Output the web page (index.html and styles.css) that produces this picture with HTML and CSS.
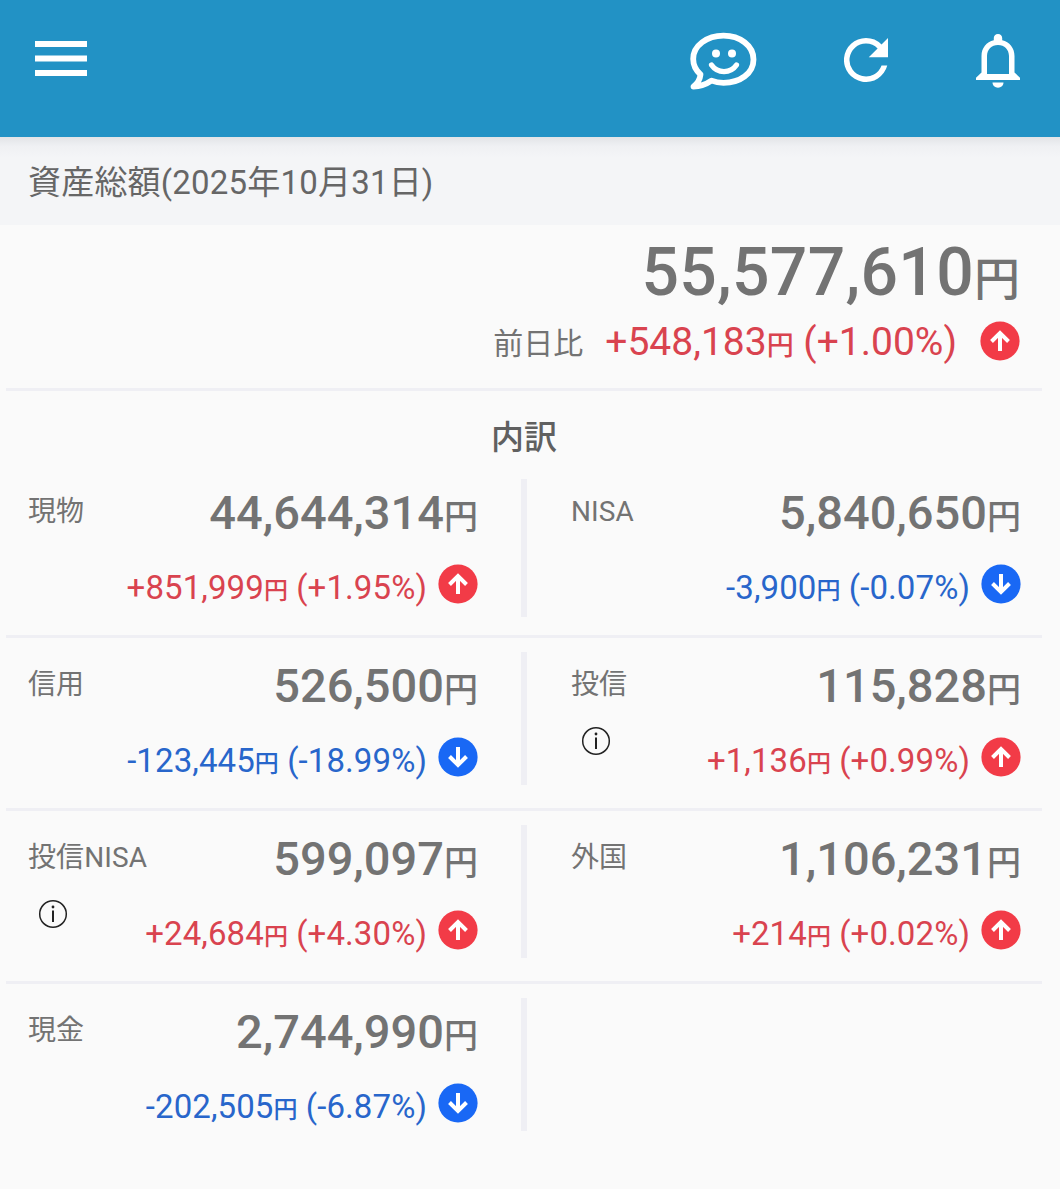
FILE: index.html
```html
<!DOCTYPE html>
<html lang="ja">
<head>
<meta charset="utf-8">
<title>資産総額</title>
<link rel="stylesheet" href="styles.css">
</head>
<body>
<svg class="defs" width="0" height="0" aria-hidden="true">
  <symbol id="up" viewBox="0 0 40 40"><circle cx="20" cy="20" r="19.6" fill="#f23b47"/><path d="M20 30V12M11.500 20.500l8.500-8.500 8.500 8.500" fill="none" stroke="#fff" stroke-width="4"/></symbol>
  <symbol id="down" viewBox="0 0 40 40"><circle cx="20" cy="20" r="19.6" fill="#1968f5"/><path d="M20 10v18M11.500 19.500l8.500 8.500 8.500-8.500" fill="none" stroke="#fff" stroke-width="4"/></symbol>
  <symbol id="info" viewBox="0 0 30 30"><circle cx="15" cy="15" r="13.300" fill="none" stroke="#222" stroke-width="1.500"/><path d="M15 11.500v11.500" stroke="#222" stroke-width="2"/><circle cx="15" cy="8" r="1.400" fill="#222"/></symbol>
</svg>
<header class="appbar">
  <svg class="menu" viewBox="0 0 52 36"><path d="M0 3h52M0 17.500h52M0 32h52" stroke="#fff" stroke-width="6"/></svg>
  <svg class="chat" viewBox="0 0 68 60" fill="none" stroke="#fff" stroke-linecap="round" stroke-linejoin="round"><path d="M11.500 43.500C6.500 39 4.200 33.500 4.200 28 4.200 14.500 18 4.700 34.500 4.700S64.500 14.500 64.500 28.500 51 51.800 34.500 51.800c-4.500 0-8.500-.8-12-2.200C17.500 53 11.500 55.500 4.500 55.500 8.500 52.500 11 48.500 11.500 43.500Z" stroke-width="5.800"/><path d="M22.500 34c6 8.700 19 8.700 25 0" stroke-width="5.200"/><g fill="#fff" stroke="none"><circle cx="27" cy="22.500" r="4"/><circle cx="43" cy="22.500" r="4"/></g></svg>
  <svg class="reload" viewBox="4 4 16 16"><path d="M17.650 6.350A7.958 7.958 0 0 0 12 4a8 8 0 1 0 7.730 10h-2.080A6 6 0 1 1 12 6c1.660 0 3.140.69 4.220 1.780L13 11h7V4l-2.350 2.350z" fill="#fff"/></svg>
  <svg class="bell" viewBox="0 0 44 54" fill="#fff"><path fill-rule="evenodd" d="M22 0c2.600 0 4.200 1.700 4.200 4v2.300C33.500 8 38.500 14 38.500 22v16.500l5.500 5.300V46H0v-2.200l5.500-5.300V22C5.500 14 10.500 8 17.800 6.300V4C17.800 1.700 19.400 0 22 0zM11 40h22V22c0-6.500-4.600-11-11-11s-11 4.500-11 11z"/><path d="M16.500 48.500h11c0 3-2.500 5.200-5.500 5.200s-5.500-2.200-5.500-5.200z"/></svg>
</header>
<main>
  <h1 class="heading">資産総額(2025年10月31日)</h1>
  <section class="summary">
    <p class="total">55,577,610<span class="yen">円</span></p>
    <div class="compare"><span class="compare-label">前日比</span><span class="delta plus">+548,183<span class="yen">円</span> (+1.00%)</span><svg class="arrow"><use href="#up"/></svg></div>
  </section>
  <section class="breakdown">
    <h2 class="title">内訳</h2>
    <div class="row">
      <article class="cell"><div class="label">現物</div><div class="value">44,644,314<span class="yen">円</span></div><div class="change plus"><span>+851,999<span class="yen">円</span> (+1.95%)</span><svg class="arrow"><use href="#up"/></svg></div></article>
      <div class="divider"></div>
      <article class="cell"><div class="label">NISA</div><div class="value">5,840,650<span class="yen">円</span></div><div class="change minus"><span>-3,900<span class="yen">円</span> (-0.07%)</span><svg class="arrow"><use href="#down"/></svg></div></article>
    </div>
    <div class="row">
      <article class="cell"><div class="label">信用</div><div class="value">526,500<span class="yen">円</span></div><div class="change minus"><span>-123,445<span class="yen">円</span> (-18.99%)</span><svg class="arrow"><use href="#down"/></svg></div></article>
      <div class="divider"></div>
      <article class="cell"><div class="label">投信</div><div class="value">115,828<span class="yen">円</span></div><svg class="info"><use href="#info"/></svg><div class="change plus"><span>+1,136<span class="yen">円</span> (+0.99%)</span><svg class="arrow"><use href="#up"/></svg></div></article>
    </div>
    <div class="row">
      <article class="cell"><div class="label">投信NISA</div><div class="value">599,097<span class="yen">円</span></div><svg class="info"><use href="#info"/></svg><div class="change plus"><span>+24,684<span class="yen">円</span> (+4.30%)</span><svg class="arrow"><use href="#up"/></svg></div></article>
      <div class="divider"></div>
      <article class="cell"><div class="label">外国</div><div class="value">1,106,231<span class="yen">円</span></div><div class="change plus"><span>+214<span class="yen">円</span> (+0.02%)</span><svg class="arrow"><use href="#up"/></svg></div></article>
    </div>
    <div class="row">
      <article class="cell"><div class="label">現金</div><div class="value">2,744,990<span class="yen">円</span></div><div class="change minus"><span>-202,505<span class="yen">円</span> (-6.87%)</span><svg class="arrow"><use href="#down"/></svg></div></article>
      <div class="divider"></div>
    </div>
  </section>
</main>
</body>
</html>
```
FILE: styles.css
```css
* { box-sizing: border-box; }
body {
  margin: 0;
  min-height: 1189px;
  background: #fafafa;
  color: #737373;
  font-family: Roboto, "Noto Sans CJK JP", sans-serif;
}
h1, h2, p { margin: 0; font-weight: 400; }
svg { display: block; flex: none; }
.defs { position: absolute; }
.appbar {
  display: flex;
  align-items: flex-start;
  height: 137px;
  padding: 0 40px 0 35px;
  background: #2292c5;
}
.menu { width: 52px; height: 36px; margin: 41px auto 0 0; }
.chat { width: 68px; height: 60px; margin: 31px 87px 0 0; }
.reload { width: 44px; height: 44px; margin: 38px 88px 0 0; }
.bell { width: 44px; height: 54px; margin-top: 34px; }
.heading {
  height: 88px;
  padding: 0 28px;
  background: linear-gradient(#e2e4e7, #eff0f3 9px, #f4f5f7 20px);
  color: #666;
  font-size: 33px;
  line-height: 92px;
  letter-spacing: 0.2px;
}
.summary {
  height: 166px;
  margin: 0 18px 0 6px;
  padding: 13px 22px 0 0;
  border-bottom: 3px solid #efeff4;
}
.yen { font-weight: 500; letter-spacing: 0; }
.total {
  height: 70px;
  font-size: 66px;
  font-weight: 500;
  line-height: 70px;
  letter-spacing: 0.3px;
  text-align: right;
}
.total .yen { font-size: 46px; }
.compare {
  display: flex;
  justify-content: flex-end;
  align-items: center;
  height: 70px;
  line-height: 70px;
  font-size: 39px;
}
.compare-label { margin: 1px 22px 0 0; font-size: 30px; }
.delta { padding-top: 2px; }
.compare .yen { font-size: 27px; }
.compare .arrow { margin: -4px 0 0 23px; }
.arrow { width: 40px; height: 40px; }
.plus { color: #d9434f; }
.minus { color: #2866cb; }
.title {
  height: 74px;
  margin-right: 12px;
  color: #606060;
  font-size: 33px;
  font-weight: 500;
  line-height: 94px;
  text-align: center;
}
.row {
  display: grid;
  grid-template-columns: 515px 6px 515px;
  height: 173px;
  margin: 0 18px 0 6px;
  padding-top: 14px;
  border-bottom: 3px solid #efeff4;
}
.row:last-child { border-bottom: 0; }
.divider { height: 133px; background: #efeff4; }
.row:nth-of-type(1) .divider { height: 138px; }
.cell {
  display: grid;
  grid-template-columns: 60px 1fr;
  grid-template-rows: 68px 70px;
  padding: 0 43px 0 22px;
}
.divider + .cell { padding: 0 21px 0 44px; }
.label {
  font-size: 28px;
  line-height: 65px;
  letter-spacing: 0.1px;
  white-space: nowrap;
}
.value {
  font-size: 47px;
  font-weight: 500;
  line-height: 67px;
  text-align: right;
  white-space: nowrap;
}
.value .yen { font-size: 34px; }
.info { grid-column: 1; width: 30px; height: 30px; margin: 6px 0 0 10px; }
.change {
  grid-column: 2;
  display: flex;
  justify-content: flex-end;
  height: 74px;
  font-size: 33px;
  line-height: 82px;
  letter-spacing: 0.1px;
  white-space: nowrap;
}
.change .yen { font-size: 24px; }
.change .arrow { margin: 17px 0 0 11px; }
```
